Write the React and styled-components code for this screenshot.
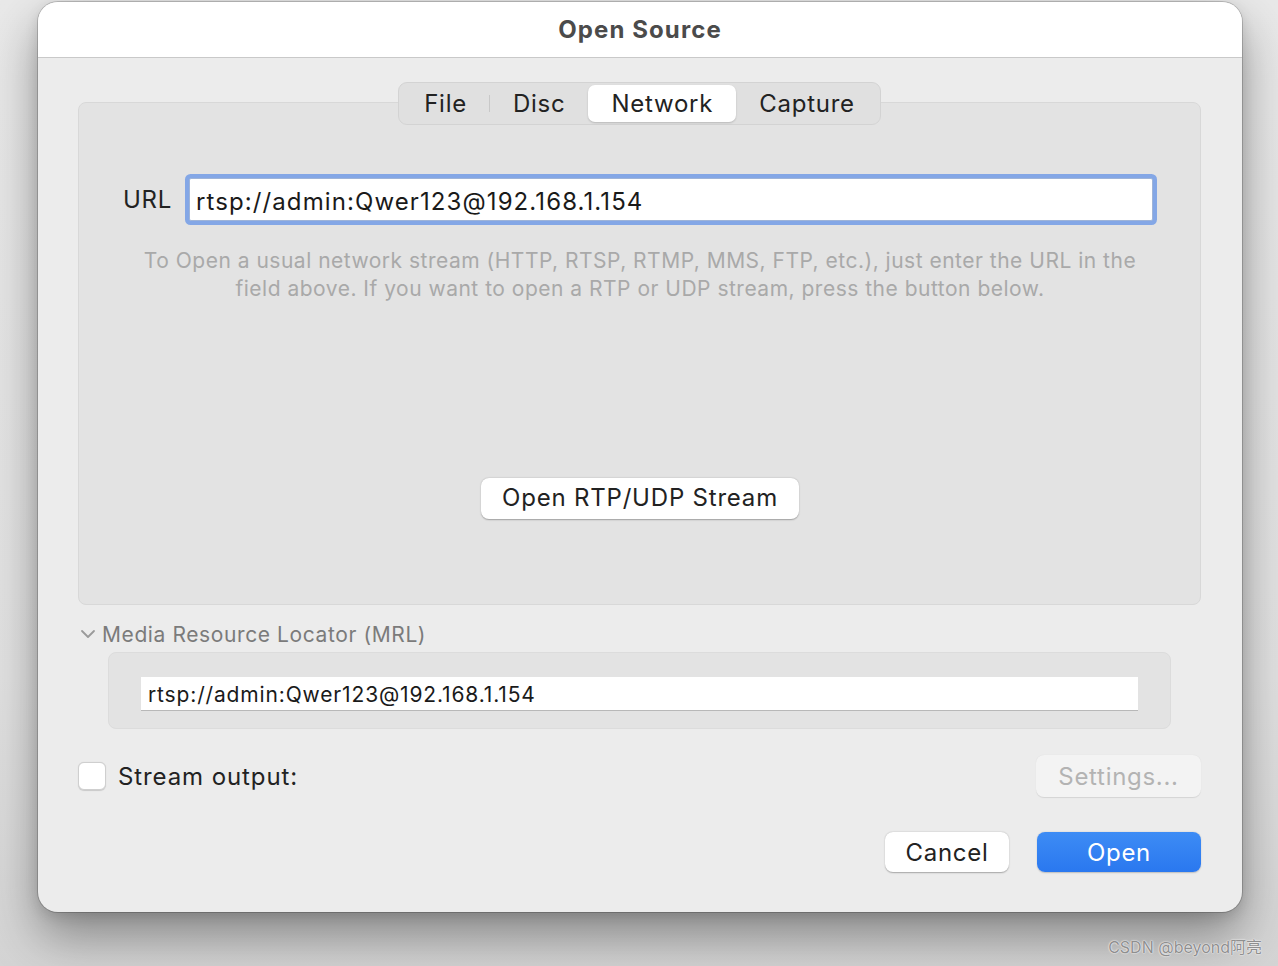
import styled, { createGlobalStyle } from "styled-components";

const GlobalStyle = createGlobalStyle`
  html, body {
    margin: 0;
    padding: 0;
    background: #e4e4e4;
    font-family: Inter, "Liberation Sans", "Noto Sans CJK SC", sans-serif;
  }
  * { box-sizing: border-box; }
`;

const tabs = ["File", "Disc", "Network", "Capture"];
const URL_VALUE = "rtsp://admin:Qwer123@192.168.1.154";

const App = () => {
  return (
    <Page>
      <GlobalStyle />
      <Window>
        <TitleBar>Open Source</TitleBar>
        <Body>
          <TabBar>
            {tabs.map((t, i) => (
              <Segment key={t} $active={t === "Network"} $sep={i === 0}>
                {t}
              </Segment>
            ))}
          </TabBar>
          <Panel>
            <UrlRow>
              <UrlLabel>URL</UrlLabel>
              <UrlInput defaultValue={URL_VALUE} />
            </UrlRow>
            <HelpText>
              To Open a usual network stream (HTTP, RTSP, RTMP, MMS, FTP, etc.), just enter the URL in the
              <br />
              field above. If you want to open a RTP or UDP stream, press the button below.
            </HelpText>
            <StreamButton>Open RTP/UDP Stream</StreamButton>
          </Panel>
          <MrlHeader>
            <svg width="16" height="10" viewBox="0 0 16 10">
              <path d="M2 2 L8 8 L14 2" fill="none" stroke="#9a9a9a" strokeWidth="1.8" strokeLinecap="round" strokeLinejoin="round" />
            </svg>
            <span>Media Resource Locator (MRL)</span>
          </MrlHeader>
          <MrlBox>
            <MrlField>{URL_VALUE}</MrlField>
          </MrlBox>
          <OutputRow>
            <CheckLabel>
              <CheckBox />
              Stream output:
            </CheckLabel>
            <Button $disabled $width={165} $height={42}>Settings...</Button>
          </OutputRow>
          <Actions>
            <Button $width={124}>Cancel</Button>
            <Button $primary $width={164}>Open</Button>
          </Actions>
        </Body>
      </Window>
      <Watermark>CSDN @beyond阿亮</Watermark>
    </Page>
  );
};
export default App;

const Page = styled.div`
  width: 1278px;
  height: 966px;
  padding: 2px 0 0 38px;
  display: flex;
  flex-direction: column;
  overflow: hidden;
  background: linear-gradient(180deg, #e9e9e9 0%, #e2e2e2 70%, #d4d4d4 100%);
`;

const Window = styled.div`
  width: 1204px;
  height: 910px;
  border-radius: 20px;
  background: #ececec;
  overflow: hidden;
  display: flex;
  flex-direction: column;
  box-shadow: 0 0 0 1px rgba(0, 0, 0, 0.18), 0 24px 50px rgba(0, 0, 0, 0.38),
    0 4px 14px rgba(0, 0, 0, 0.12);
`;

const TitleBar = styled.div`
  height: 56px;
  flex: none;
  background: #ffffff;
  border-bottom: 1px solid #c9c9c9;
  display: flex;
  align-items: center;
  justify-content: center;
  font-size: 24px;
  font-weight: 700;
  color: #4b4b4b;
  letter-spacing: 1.1px;
`;

const Body = styled.div`
  flex: 1;
  display: flex;
  flex-direction: column;
  padding: 24px 41px 0 40px;
`;

const TabBar = styled.div`
  align-self: center;
  display: flex;
  height: 43px;
  padding: 2px;
  background: #e0e0e0;
  border: 1px solid #d3d3d3;
  border-radius: 9px;
  margin-bottom: -23px;
  position: relative;
  z-index: 1;
`;

const Segment = styled.div`
  display: flex;
  align-items: center;
  justify-content: center;
  padding: 0 23px;
  font-size: 24px;
  letter-spacing: 0.75px;
  color: #222;
  border-radius: 7px;
  position: relative;
  background: ${(p) => (p.$active ? "#ffffff" : "transparent")};
  box-shadow: ${(p) => (p.$active ? "0 1px 2px rgba(0,0,0,0.18)" : "none")};

  &::after {
    content: "";
    display: ${(p) => (p.$sep ? "block" : "none")};
    position: absolute;
    right: 0;
    top: 10px;
    bottom: 10px;
    width: 1px;
    background: #c8c8c8;
  }
`;

const Panel = styled.div`
  height: 503px;
  background: #e3e3e3;
  border: 1px solid #d8d8d8;
  border-radius: 8px;
  display: flex;
  flex-direction: column;
  align-items: center;
  padding: 71px 43px 0 44px;
`;

const UrlRow = styled.div`
  align-self: stretch;
  display: flex;
  align-items: center;
  gap: 13px;
`;

const UrlLabel = styled.label`
  font-size: 24px;
  letter-spacing: 0.7px;
  color: #222;
`;

const UrlInput = styled.input`
  flex: 1;
  height: 43px;
  margin: 4px;
  border: 1px solid #9fb4d8;
  border-radius: 2px;
  background: #fff;
  box-shadow: 0 0 0 4px #84a7e6;
  font-family: inherit;
  font-size: 24px;
  letter-spacing: 1.1px;
  color: #1a1a1a;
  padding: 3px 6px 0;
  outline: none;
`;

const HelpText = styled.p`
  margin: 22px 0 0;
  text-align: center;
  font-size: 21px;
  line-height: 28px;
  letter-spacing: 0.5px;
  color: #a9a9a9;
`;

const StreamButton = styled.div`
  margin-top: 175px;
  width: 318px;
  height: 41px;
  display: flex;
  align-items: center;
  justify-content: center;
  padding-bottom: 2px;
  background: #fff;
  border-radius: 8px;
  box-shadow: 0 0.5px 1.5px rgba(0, 0, 0, 0.3);
  font-size: 24px;
  letter-spacing: 0.8px;
  color: #222;
`;

const MrlHeader = styled.div`
  display: flex;
  align-items: center;
  gap: 6px;
  margin: 16px 0 0 2px;
  height: 26px;
  font-size: 21px;
  letter-spacing: 0.6px;
  color: #7b7b7b;
`;

const MrlBox = styled.div`
  margin: 5px 30px 0 30px;
  height: 77px;
  background: #e3e3e3;
  border: 1px solid #dcdcdc;
  border-radius: 8px;
  display: flex;
  align-items: center;
  padding: 6px 32px 0;
`;

const MrlField = styled.div`
  flex: 1;
  height: 34px;
  background: #fff;
  border-bottom: 1px solid #b8b8b8;
  display: flex;
  align-items: center;
  padding: 2px 7px 0;
  font-size: 21px;
  letter-spacing: 0.85px;
  color: #1a1a1a;
`;

const OutputRow = styled.div`
  margin-top: 26px;
  display: flex;
  align-items: center;
  justify-content: space-between;
`;

const CheckLabel = styled.label`
  display: flex;
  align-items: center;
  gap: 12px;
  font-size: 24px;
  letter-spacing: 0.9px;
  color: #222;
`;

const CheckBox = styled.span`
  width: 28px;
  height: 28px;
  border-radius: 6px;
  background: #fff;
  border: 1px solid #cfcfcf;
  box-shadow: 0 0.5px 1px rgba(0, 0, 0, 0.15);
`;

const Button = styled.div`
  width: ${(p) => p.$width}px;
  height: ${(p) => p.$height || 40}px;
  display: flex;
  align-items: center;
  justify-content: center;
  border-radius: 8px;
  font-size: 24px;
  letter-spacing: 0.7px;
  color: ${(p) => (p.$primary ? "#fff" : p.$disabled ? "#b3b3b3" : "#222")};
  background: ${(p) =>
    p.$primary
      ? "linear-gradient(180deg, #3d8cf5 0%, #2a78ef 100%)"
      : p.$disabled
      ? "#f3f3f3"
      : "#fff"};
  box-shadow: ${(p) =>
    p.$primary
      ? "0 0.5px 1.5px rgba(0,0,0,0.2)"
      : p.$disabled
      ? "0 0.5px 1px rgba(0,0,0,0.1)"
      : "0 0.5px 1.5px rgba(0,0,0,0.3)"};
`;

const Actions = styled.div`
  margin-top: 35px;
  display: flex;
  justify-content: flex-end;
  gap: 28px;
`;

const Watermark = styled.div`
  align-self: flex-end;
  margin: 22px 16px 0 0;
  font-size: 16px;
  color: #8f8f8f;
  text-shadow: 0 0 2px #fff, 0 0 1px #fff;
`;
